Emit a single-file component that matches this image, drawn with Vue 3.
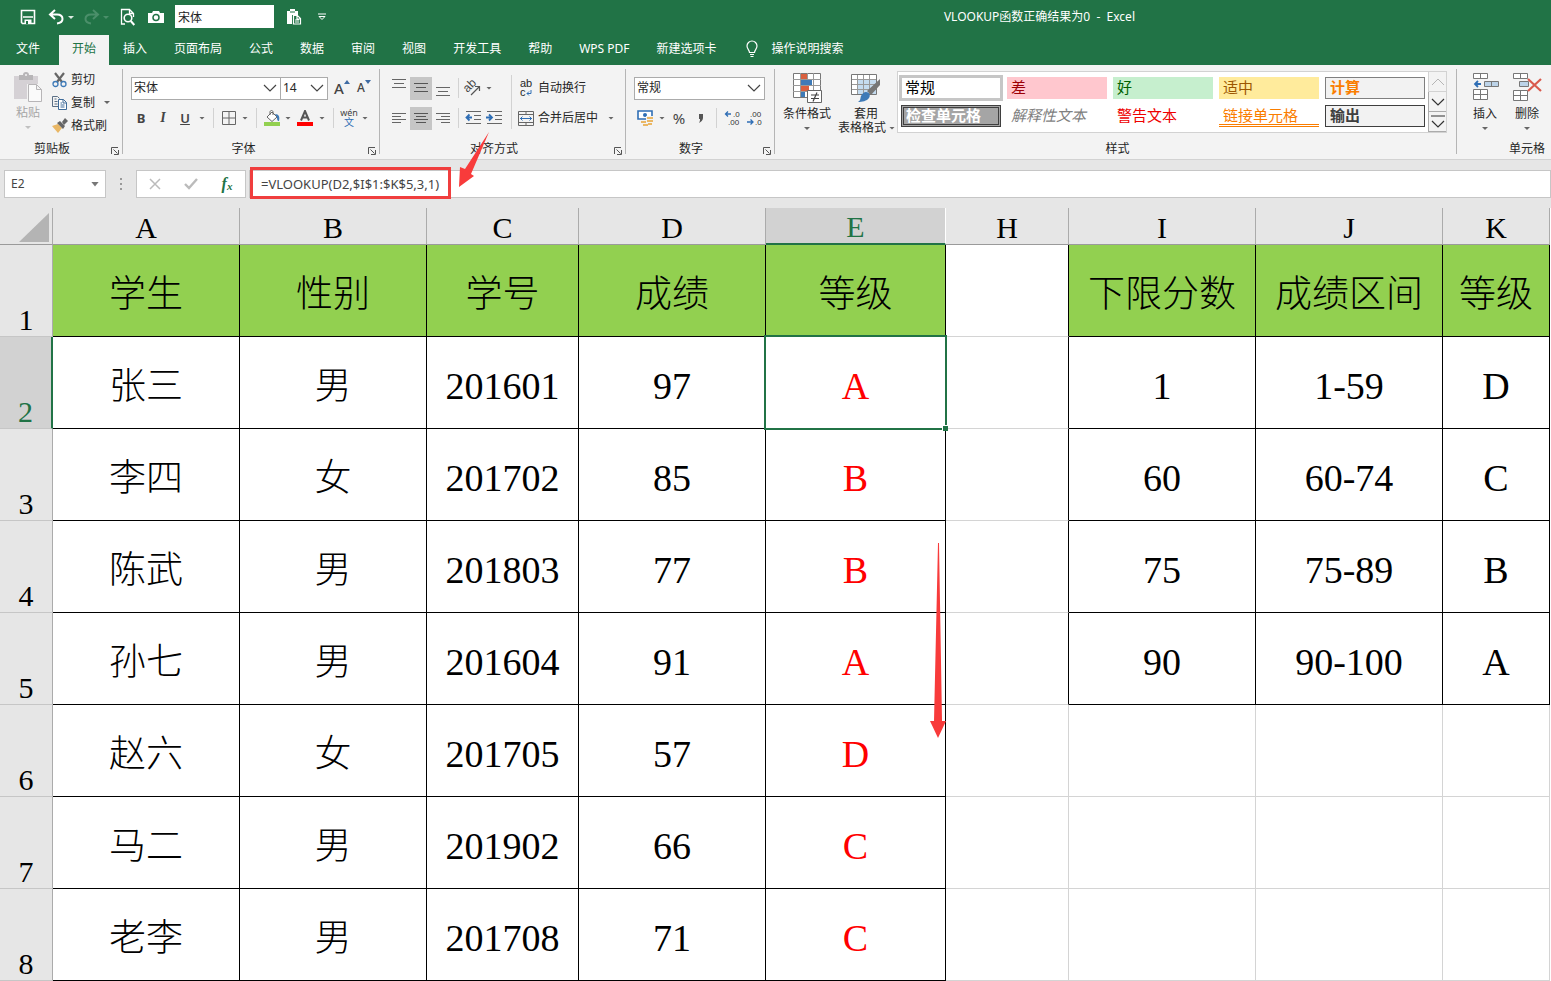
<script setup>
import { ref } from 'vue'

const tabs = ['插入', '页面布局', '公式', '数据', '审阅', '视图', '开发工具', '帮助', 'WPS PDF', '新建选项卡']
const columns = ['A', 'B', 'C', 'D', 'E', 'H', 'I', 'J', 'K']
const headings = ['学生', '性别', '学号', '成绩', '等级', '', '下限分数', '成绩区间', '等级']
const rows = [
  headings,
  ['张三', '男', '201601', '97', 'A', '', '1', '1-59', 'D'],
  ['李四', '女', '201702', '85', 'B', '', '60', '60-74', 'C'],
  ['陈武', '男', '201803', '77', 'B', '', '75', '75-89', 'B'],
  ['孙七', '男', '201604', '91', 'A', '', '90', '90-100', 'A'],
  ['赵六', '女', '201705', '57', 'D', '', '', '', ''],
  ['马二', '男', '201902', '66', 'C', '', '', '', ''],
  ['老李', '男', '201708', '71', 'C', '', '', '', ''],
]
const styles = [
  ['常规', 'normal'], ['差', 'bad'], ['好', 'good'], ['适中', 'neutral'], ['计算', 'calc'],
  ['检查单元格', 'check'], ['解释性文本', 'explain'], ['警告文本', 'warn'], ['链接单元格', 'linked'], ['输出', 'output'],
]
const formula = ref('=VLOOKUP(D2,$I$1:$K$5,3,1)')
const nameBox = ref('E2')
const quickFont = ref('宋体')

function cellClass(r, c) {
  return {
    head: r === 0 && c !== 5,
    lined: c < 5 || (c > 5 && r < 5),
    edge: c === 5 && r < 5,
    grade: c === 4 && r > 0,
    selected: c === 4 && r === 1,
    han: /[\u4e00-\u9fa5]/.test(rows[r][c]),
  }
}
</script>

<template>
  <div class="app">
    <header class="titlebar">
      <button class="q" aria-label="保存"><svg width="16" height="16" viewBox="0 0 16 16"><path d="M1.500 1.500h13v13h-12l-1-1z" fill="none" stroke="#fff" stroke-width="1.600"/><path d="M3 8h10" stroke="#fff" stroke-width="1.500"/><path d="M4.500 10.500h7v4h-7z" fill="#fff"/><path d="M6 12h2v3H6z" fill="#217346"/></svg></button>
      <button class="q undo" aria-label="撤消"><svg width="26" height="16" viewBox="0 0 26 16"><path d="M7 1L2 5.500 7 10M2.500 5.500H9c3.500 0 5.500 2 5.500 4.500S12.500 14 9 14.500" fill="none" stroke="#fff" stroke-width="2"/><path d="M20 7h6l-3 3z" fill="#dcebe2"/></svg></button>
      <button class="q undo" aria-label="恢复"><svg width="26" height="16" viewBox="0 0 26 16"><path d="M10 1l5 4.500L10 10M14.500 5.500H8C4.500 5.500 2.500 7.500 2.500 10s2 4 5.500 4.500" fill="none" stroke="#4b8f6a" stroke-width="2"/><path d="M20 7h6l-3 3z" fill="#4b8f6a"/></svg></button>
      <button class="q" aria-label="打印预览"><svg width="16" height="18" viewBox="0 0 16 18"><path d="M5 16H1.500V1.500h8l4 4V9M9.500 1.500v4h4" fill="none" stroke="#fff" stroke-width="1.300"/><circle cx="8" cy="10" r="3.800" fill="none" stroke="#fff" stroke-width="1.600"/><path d="M10.800 13l3.500 4" stroke="#fff" stroke-width="2"/></svg></button>
      <button class="q cam" aria-label="照相机"><svg width="16" height="14" viewBox="0 0 16 14"><path d="M0 3h4l1-2h6l1 2h4v10H0z" fill="#fff"/><circle cx="8" cy="7.500" r="3" fill="none" stroke="#217346" stroke-width="1.500"/></svg></button>
      <input v-model="quickFont" class="quick-font" aria-label="字体">
      <button class="q paste-q" aria-label="粘贴"><svg width="16" height="17" viewBox="0 0 16 17"><path d="M1 3h3V1h5v2h3v4H6v9H1z" fill="#fff"/><path d="M4 4h5" stroke="#217346"/><path d="M7.500 7.500h4l3 3v5.500h-7zM11 7.500V11h3.500M9 12h4M9 14h4" fill="none" stroke="#fff" stroke-width="1.200"/></svg></button>
      <button class="q more-q" aria-label="自定义快速访问工具栏"><svg width="10" height="8" viewBox="0 0 10 8"><path d="M1 1h8M2 3.500h6L5 6.500z" fill="none" stroke="#fff"/></svg></button>
      <h1>VLOOKUP函数正确结果为0&nbsp; -&nbsp; Excel</h1>
    </header>

    <nav class="tabs">
      <button class="file">文件</button>
      <button class="active">开始</button>
      <button v-for="t in tabs" :key="t">{{ t }}</button>
      <button class="tell"><svg width="14" height="18" viewBox="0 0 14 18"><path d="M4.500 12.500C4.500 10 2 9 2 6a5 5 0 0 1 10 0c0 3-2.500 4-2.500 6.500zM5 14.500h4M5.500 16.500h3" fill="none" stroke="#fff" stroke-width="1.200"/></svg>操作说明搜索</button>
    </nav>

    <section class="ribbon">
      <div class="group clip">
        <div class="clip-body">
          <button class="paste" disabled><svg width="30" height="32" viewBox="0 0 30 32"><path d="M1 4h24v8H14v15H1z" fill="#d5d1d5"/><path d="M6 3h4a3 3 0 0 1 6 0h4v5H6z" fill="#b7b5b7"/><circle cx="13" cy="3" r="1" fill="#f3f3f3"/><path d="M15.500 12.500h8l5 5v12h-13zM23.500 12.500v5h5" fill="#fafafa" stroke="#b7b5b7"/></svg>粘贴<i class="caret"></i></button>
          <div class="clip-list">
            <button><svg width="16" height="16" viewBox="0 0 16 16"><path d="M3 1l7 9M12 1L5 10" stroke="#666" stroke-width="2.200"/><circle cx="3.500" cy="12" r="2.500" fill="none" stroke="#3e7ab7" stroke-width="1.300"/><circle cx="11.500" cy="12" r="2.500" fill="none" stroke="#3e7ab7" stroke-width="1.300"/></svg>剪切</button>
            <button><svg width="16" height="16" viewBox="0 0 16 16"><path d="M6 11.500H.500v-10h5l2 2M2.500 4h2M2.500 6.500h3M2.500 9h3" fill="none" stroke="#5b6f85"/><path d="M6.500 4.500h5l3 3v7h-8zM11 4.500V8h3.500M8.500 8h1.500M8.500 10h4M8.500 12h4" fill="#fff" stroke="#3e6b99"/></svg>复制<i class="caret gap"></i></button>
            <button><svg width="16" height="16" viewBox="0 0 16 16"><path d="M0 8l6-2 4 4-4 5z" fill="#e9b765"/><path d="M5 5l3-2 5 5-2 3z" fill="#666"/><path d="M10 4l3-4 3 3-4 4z" fill="#666"/></svg>格式刷</button>
          </div>
        </div>
        <footer>剪贴板<i class="launch"><svg viewBox="0 0 8 8"><path d="M.5 7V.5H7M2.500 2.500l4 4M7.500 3v4.500H3" fill="none" stroke="#555"/></svg></i></footer>
      </div>

      <div class="group font">
        <div class="row">
          <span class="combo fam"><select aria-label="字体名称"><option>宋体</option></select><svg width="14" height="8" viewBox="0 0 14 8"><path d="M1 1l6 6 6-6" fill="none" stroke="#444" stroke-width="1.200"/></svg></span>
          <span class="combo size"><select aria-label="字号"><option>14</option></select><svg width="14" height="8" viewBox="0 0 14 8"><path d="M1 1l6 6 6-6" fill="none" stroke="#444" stroke-width="1.200"/></svg></span>
          <button class="tool grow">A<svg width="6" height="4" viewBox="0 0 6 4"><path d="M0 4l3-4 3 4z" fill="#3e6ba3"/></svg></button>
          <button class="tool grow small">A<svg width="6" height="4" viewBox="0 0 6 4"><path d="M0 0h6L3 4z" fill="#3e6ba3"/></svg></button>
        </div>
        <div class="row">
          <button class="tool"><b>B</b></button><button class="tool"><em>I</em></button><button class="tool"><u>U</u></button><i class="caret slot"></i>
          <i class="sep"></i>
          <button class="tool t20" aria-label="边框"><svg width="14" height="14" viewBox="0 0 14 14"><path d="M.5.5h13v13H.5zM7 1v12M1 7h12" fill="none" stroke="#666"/></svg></button><i class="caret slot"></i>
          <i class="sep"></i>
          <button class="tool t20" aria-label="填充颜色"><svg width="16" height="16" viewBox="0 0 16 16"><path d="M0 12h16v4H0z" fill="#92d050"/><path d="M3 7l5-5 5 5-5 4.500zM6 5V2c0-2 3-2 3 0v3" fill="#fff" stroke="#666"/><path d="M11 4c4 0 5 3 4 7-2 0-2-2-2-4z" fill="#3e7ab7"/></svg></button><i class="caret slot"></i>
          <button class="tool fc" aria-label="字体颜色"><svg width="16" height="16" viewBox="0 0 16 16"><path d="M0 12h16v4H0z" fill="#f00"/><path d="M4 10.500L8 1l4 9.500M5.500 7.500h5" fill="none" stroke="#555" stroke-width="2"/></svg></button><i class="caret slot"></i>
          <i class="sep"></i>
          <button class="tool t20 wen"><span>wén</span><span class="zi">文</span></button><i class="caret slot"></i>
        </div>
        <footer>字体<i class="launch"><svg viewBox="0 0 8 8"><path d="M.5 7V.5H7M2.500 2.500l4 4M7.500 3v4.500H3" fill="none" stroke="#555"/></svg></i></footer>
      </div>

      <div class="group align">
        <div class="align-body">
          <div class="align-left">
            <div class="row">
              <button class="tool" aria-label="顶端对齐"><svg width="14" height="18" viewBox="0 0 14 18"><path d="M0 .5h14M2 4.500h10M0 8.500h14" stroke="#666"/></svg></button>
              <button class="tool on" aria-label="垂直居中"><svg width="14" height="18" viewBox="0 0 14 18"><path d="M0 4.500h14M2 8.500h10M0 12.500h14" stroke="#555"/></svg></button>
              <button class="tool" aria-label="底端对齐"><svg width="14" height="18" viewBox="0 0 14 18"><path d="M0 8.500h14M2 12.500h10M0 16.500h14" stroke="#666"/></svg></button>
              <i class="sep"></i>
              <button class="tool t20" aria-label="方向"><svg class="spill" width="18" height="18" viewBox="0 0 18 18"><text x="1" y="10" transform="rotate(-45 7 9)" font-size="12" font-family="Liberation Sans" fill="#444">ab</text><path d="M7 16l8-8M11 7.500h4.500V12" fill="none" stroke="#555" stroke-width="1.200"/></svg></button><i class="caret slot"></i>
            </div>
            <div class="row">
              <button class="tool" aria-label="左对齐"><svg width="14" height="13" viewBox="0 0 14 13"><path d="M0 1.500h14M0 4.500h9M0 7.500h14M0 10.500h9" stroke="#666"/></svg></button>
              <button class="tool on" aria-label="居中"><svg width="14" height="13" viewBox="0 0 14 13"><path d="M0 1.500h14M2 4.500h10M0 7.500h14M2 10.500h10" stroke="#555"/></svg></button>
              <button class="tool" aria-label="右对齐"><svg width="14" height="13" viewBox="0 0 14 13"><path d="M0 1.500h14M5 4.500h9M0 7.500h14M5 10.500h9" stroke="#666"/></svg></button>
              <i class="sep"></i>
              <button class="tool t20" aria-label="减少缩进量"><svg width="16" height="14" viewBox="0 0 16 14"><path d="M1 .5h15M9 4.500h7M9 8.500h7M1 12.500h15" stroke="#666"/><path d="M7 6.500H2M4.500 3.500l-3 3 3 3" fill="none" stroke="#2f6eb5" stroke-width="1.800"/></svg></button>
              <button class="tool" aria-label="增加缩进量"><svg width="16" height="14" viewBox="0 0 16 14"><path d="M1 .5h15M9 4.500h7M9 8.500h7M1 12.500h15" stroke="#666"/><path d="M0 6.500h5M3 3.500l3 3-3 3" fill="none" stroke="#2f6eb5" stroke-width="1.800"/></svg></button>
            </div>
          </div>
          <i class="sep tall"></i>
          <div class="align-right">
            <button class="label-tool"><span class="abc"><span>ab</span><span>c<svg width="6" height="6" viewBox="0 0 6 6"><path d="M5 0v3.500H1M3 1.500l-2 2 2 2" fill="none" stroke="#2f6eb5"/></svg></span></span>自动换行</button>
            <button class="label-tool"><svg width="16" height="15" viewBox="0 0 16 15"><path d="M.5.5h15v14H.5zM1 3.500h14M1 11.500h14M8 1v2M8 12v2" fill="none" stroke="#666"/><path d="M2 7.500h12M4.500 5.500l-2 2 2 2M11.500 5.500l2 2-2 2" fill="none" stroke="#2f6eb5"/></svg>合并后居中<i class="caret gap"></i></button>
          </div>
        </div>
        <footer>对齐方式<i class="launch"><svg viewBox="0 0 8 8"><path d="M.5 7V.5H7M2.500 2.500l4 4M7.500 3v4.500H3" fill="none" stroke="#555"/></svg></i></footer>
      </div>

      <div class="group number">
        <div class="row">
          <span class="combo fmt"><select aria-label="数字格式"><option>常规</option></select><svg width="14" height="8" viewBox="0 0 14 8"><path d="M1 1l6 6 6-6" fill="none" stroke="#444" stroke-width="1.200"/></svg></span>
        </div>
        <div class="row">
          <button class="tool" aria-label="会计数字格式"><svg width="16" height="16" viewBox="0 0 16 16"><path d="M1 1h14v8H1z" fill="#fff" stroke="#2f6eb5" stroke-width="1.600"/><circle cx="8" cy="5" r="2" fill="#2f6eb5"/><path d="M9 6h7v9H5v-5h4z" fill="#f3f3f3"/><path d="M10 7h6v2h-6zM10 10h6v2h-6zM4 11h5v2H4zM6 14h5v2H6zM11 13h4v2h-4z" fill="#eab765"/></svg></button><i class="caret slot"></i>
          <button class="tool pct">%</button>
          <button class="tool" aria-label="千位分隔样式"><svg width="6" height="9" viewBox="0 0 6 9"><path d="M1 0h4v4c0 2-2 4-4 5 1-2 1-3 1-4H1z" fill="#555"/></svg></button>
          <i class="sep"></i>
          <button class="tool dec" aria-label="增加小数位数"><svg width="16" height="16" viewBox="0 0 16 16"><path d="M7 4H2M4 1.500L1.500 4 4 6.500" fill="none" stroke="#2f6eb5" stroke-width="1.300"/><text x="9" y="7" font-size="8" font-family="Liberation Sans" fill="#333">.0</text><text x="4" y="15" font-size="8" font-family="Liberation Sans" fill="#333">.00</text></svg></button>
          <button class="tool dec" aria-label="减少小数位数"><svg width="16" height="16" viewBox="0 0 16 16"><path d="M1 12h6M4.500 9.500L7 12l-2.500 2.500" fill="none" stroke="#2f6eb5" stroke-width="1.300"/><text x="4" y="7" font-size="8" font-family="Liberation Sans" fill="#333">.00</text><text x="9" y="15" font-size="8" font-family="Liberation Sans" fill="#333">.0</text></svg></button>
        </div>
        <footer>数字<i class="launch"><svg viewBox="0 0 8 8"><path d="M.5 7V.5H7M2.500 2.500l4 4M7.500 3v4.500H3" fill="none" stroke="#555"/></svg></i></footer>
      </div>

      <div class="group style">
        <div class="style-body">
          <button class="big"><svg width="30" height="32" viewBox="0 0 30 32"><path d="M1.500 1.500h27v24h-27z" fill="#fff" stroke="#777"/><path d="M9 2h6v5H9zM9 14h6v5H9z" fill="#d9603f"/><path d="M9 8h11v5H9zM9 20h4v5H9z" fill="#3e7ab7"/><path d="M15 14h2v5h-2z" fill="#d9603f"/><path d="M1 7.500h28M1 13.500h28M1 19.500h28M8.500 1v24M15.500 1v6M21.500 1v18" stroke="#999"/><path d="M15.500 18.500h14v12h-14z" fill="#fff" stroke="#666"/><path d="M19 23h8M19 26.500h8M25 20.500l-4 9" stroke="#444" stroke-width="1.200"/></svg>条件格式<i class="caret"></i></button>
          <button class="big"><svg width="30" height="32" viewBox="0 0 30 32"><path d="M.5 2.500h25v20H.5z" fill="#fff" stroke="#777"/><path d="M7 8h18v14H7z" fill="#c5dcf0"/><path d="M1 7.500h24M1 12.500h24M1 17.500h24M6.500 3v19M12.500 3v19M18.500 3v19" stroke="#999"/><path d="M29 7v6l-9 10-4-4z" fill="#777"/><path d="M15 20c3 0 5 3 3 6-2 3-7 4-11 4 3-2 2-3 3-6 1-2 3-4 5-4z" fill="#3e7ab7"/></svg>套用<span class="two">表格格式<i class="caret"></i></span></button>
          <div class="gallery">
            <div class="items">
              <button v-for="s in styles" :key="s[0]" :class="s[1]">{{ s[0] }}</button>
            </div>
            <div class="scroll">
              <button aria-label="上一行" class="dim"><svg width="14" height="8" viewBox="0 0 14 8"><path d="M1 7l6-6 6 6" fill="none" stroke="#b5b5b5"/></svg></button>
              <button aria-label="下一行"><svg width="14" height="8" viewBox="0 0 14 8"><path d="M1 1l6 6 6-6" fill="none" stroke="#333" stroke-width="1.200"/></svg></button>
              <button aria-label="其他"><svg width="14" height="13" viewBox="0 0 14 13"><path d="M0 1h14M1 6l6 6 6-6" fill="none" stroke="#333" stroke-width="1.200"/></svg></button>
            </div>
          </div>
        </div>
        <footer>样式</footer>
      </div>

      <div class="group cells">
        <div class="style-body">
          <button class="big"><svg width="28" height="32" viewBox="0 0 28 32"><path d="M2.500 1.500h14v5h-14zM9.500 1.500v5M2.500 17.500h14v10h-14zM9.500 17.500v10M2.500 22.500h14" fill="#fff" stroke="#777"/><path d="M13.500 9.500h14v5h-14zM20.500 9.500v5" fill="#bcd3e8" stroke="#777"/><path d="M10 12H4M7 9l-3 3 3 3" fill="none" stroke="#2f6eb5" stroke-width="1.800"/></svg>插入<i class="caret"></i></button>
          <button class="big"><svg width="30" height="32" viewBox="0 0 30 32"><path d="M1.500 1.500h14v5h-14zM8.500 1.500v5M1.500 18.500h14v10h-14zM8.500 18.500v10M1.500 23.500h14" fill="#fff" stroke="#777"/><path d="M7.500 9.500h9v5h-9z" fill="#bcd3e8" stroke="#777"/><path d="M16 7l13 12M29 7L16 19" stroke="#d9594c" stroke-width="2.200"/></svg>删除<i class="caret"></i></button>
        </div>
        <footer>单元格</footer>
      </div>
    </section>

    <section class="formula-bar">
      <div class="name-box"><input v-model="nameBox" aria-label="名称框"><button aria-label="展开名称"></button></div>
      <i class="dots"></i>
      <div class="fx">
        <button aria-label="取消"><svg width="12" height="12" viewBox="0 0 12 12"><path d="M1 1l10 10M11 1L1 11" stroke="#bbb" stroke-width="1.500"/></svg></button>
        <button aria-label="输入"><svg width="14" height="12" viewBox="0 0 14 12"><path d="M1 6l4 4 8-9" fill="none" stroke="#bbb" stroke-width="2.400"/></svg></button>
        <button class="fn">f<small>x</small></button>
      </div>
      <div class="formula"><input v-model="formula" aria-label="编辑栏"><i class="mark"></i></div>
    </section>

    <main>
      <table>
        <colgroup><col class="w-h"><col class="w-n"><col class="w-n"><col class="w-c"><col class="w-n"><col class="w-e"><col class="w-g"><col class="w-n"><col class="w-n"><col></colgroup>
        <thead>
          <tr><th class="corner"><svg width="30" height="29" viewBox="0 0 30 29"><path d="M30 0v29H0z" fill="#b4b4b4"/></svg></th><th v-for="c in columns" :key="c" :class="{ cur: c === 'E' }" scope="col">{{ c }}</th></tr>
        </thead>
        <tbody>
          <tr v-for="(row, r) in rows" :key="r">
            <th scope="row" :class="{ cur: r === 1 }">{{ r + 1 }}</th>
            <td v-for="(v, c) in row" :key="c" :class="cellClass(r, c)">{{ v }}<i v-if="r === 1 && c === 4" class="ring"></i></td>
          </tr>
        </tbody>
      </table>
    </main>

    <svg class="arrow a1" width="32" height="56" viewBox="0 0 32 56"><path d="M30 0L12 42l3 2L0 55l1-20 5 2z" fill="#f83b3b"/></svg>
    <svg class="arrow a2" width="16" height="196" viewBox="0 0 16 196"><path d="M8 0l1 0 3 178h4L8 195 0 178h4z" fill="#f83b3b"/></svg>
  </div>
</template>

<style>
body { background: #fff; overflow: hidden; }
</style>

<style scoped>
.app { position: relative; font: 12px/16px "Noto Sans", "Noto Sans CJK SC", sans-serif; color: #262626; }
.app * { box-sizing: border-box; }
button, input, select { font: inherit; color: inherit; border: 0; padding: 0; margin: 0; background: none; }
svg { display: block; flex: none; }
button { display: flex; align-items: center; justify-content: center; white-space: nowrap; }
.titlebar { display: flex; align-items: center; height: 35px; background: #217346; color: #fff; padding: 0 416px 2px 20px; }
.titlebar h1 { margin: 0 0 0 auto; font-size: 12px; font-weight: 400; white-space: nowrap; }
.q { width: 16px; }
.undo { width: 26px; margin-left: 12px; }
.undo + .undo { margin-left: 9px; }
.undo + .q:not(.undo) { margin-left: 11px; }
.cam { margin-left: 12px; }
.quick-font { width: 99px; height: 23px; margin-left: 11px; background: #fff; color: #222; padding-left: 3px; }
.paste-q { margin-left: 12px; }
.more-q { width: 10px; margin-left: 15px; }
.tabs { display: flex; gap: 1px; height: 30px; background: #217346; color: #fff; }
.tabs button { padding: 0 13px 2px; }
.tabs .file { padding: 0 16px 2px; margin-right: 2px; }
.tabs .active { background: #f3f3f3; color: #217346; }
.tabs .tell { gap: 13px; padding-left: 14px; }

.ribbon { display: flex; background: #f3f3f3; border-bottom: 1px solid #d2d2d2; height: 95px; }
.group { position: relative; display: flex; flex-direction: column; flex: none; padding-top: 8px; }
.group::after { content: ""; position: absolute; right: 0; top: 4px; bottom: 5px; width: 1px; background: #b5b5b5; }
.cells::after { display: none; }
.group footer { margin-top: auto; height: 22px; line-height: 23px; text-align: center; position: relative; }
.launch { position: absolute; right: 4px; bottom: 4px; width: 8px; height: 8px; }
.row { display: flex; align-items: center; height: 30px; }
.caret { flex: none; width: 6px; height: 3px; background: #666; clip-path: polygon(0 0, 100% 0, 50% 100%); }
.caret.slot { margin: 0 3px; }
.tool { flex: none; width: 22px; height: 23px; color: #444; }
.t20 { width: 20px; }
.on { background: #c6c6c6; }
.spill { overflow: visible; }
.sep { flex: none; width: 11px; height: 20px; background: linear-gradient(#d2d2d2, #d2d2d2) center / 1px 100% no-repeat; }
.sep.tall { height: 54px; margin-top: 2px; }
.combo { position: relative; display: flex; align-items: center; height: 23px; background: #fff; border: 1px solid #ababab; }
.combo select { appearance: none; width: 100%; height: 100%; padding-left: 2px; outline: 0; }
.combo svg { position: absolute; right: 3px; pointer-events: none; }

.clip { width: 123px; padding-top: 3px; }
.clip-body { display: flex; }
.clip-body .paste { flex-direction: column; justify-content: flex-start; width: 28px; margin: 4px 10px 0 14px; color: #a6a6a6; height: 60px; gap: 1px; }
.paste .caret { background: #c0c0c0; margin-top: 4px; }
.clip-list { display: flex; flex-direction: column; }
.clip-list button { height: 23px; gap: 3px; justify-content: flex-start; }
.clip-list .gap { margin-left: 6px; }
.clip footer { padding-right: 19px; margin-top: 0; }

.font { width: 257px; padding-left: 7px; }
.font footer { padding-right: 23px; }
.fam { width: 150px; margin-left: 1px; }
.size { width: 48px; margin-left: -1px; }
.grow { font-size: 15px; gap: 0; margin-left: 3px; font-weight: 500; }
.grow svg { margin-bottom: 12px; }
.grow.small { font-size: 12px; margin-left: 0; }
.tool b { font-size: 13px; }
.tool em { font: italic bold 14px "Liberation Serif", serif; }
.tool u { font-size: 13px; font-weight: 600; }
.fc { width: 22px; }
.wen { flex-direction: column; font-size: 9px; line-height: 8px; }
.zi { color: #2f6eb5; font-size: 10px; line-height: 10px; }

.align { width: 246px; padding-left: 8px; }
.align-body { display: flex; }
.align-left { width: 118px; }
.align .row .sep { width: 9px; }
.label-tool { height: 30px; gap: 4px; justify-content: flex-start; padding-left: 1px; }
.label-tool .gap { margin-left: 6px; }
.abc { display: flex; flex-direction: column; width: 16px; font: 11px/11px "Liberation Sans", sans-serif; text-align: left; padding-left: 2px; }
.abc span { display: flex; align-items: center; height: 9px; }
.align footer { padding-right: 26px; }

.number { width: 149px; padding-left: 8px; }
.fmt { width: 131px; }
.pct { font-size: 15px; }
.number .sep { width: 9px; }
.number footer { padding-right: 27px; }

.style { flex: 1; min-width: 0; padding-left: 3px; }
.style-body { display: flex; }
.big { flex: none; flex-direction: column; justify-content: flex-start; width: 58px; height: 61px; line-height: 14px; }
.big + .big { width: 60px; }
.big svg { margin-bottom: 3px; margin-top: -1px; }
.big > .caret { margin-top: 6px; }
.two { display: flex; align-items: center; gap: 3px; margin-left: 1px; }
.gallery { flex: 1; display: flex; height: 62px; margin: -2px 10px 0 1px; background: #fff; border: 1px solid #d2d2d2; }
.items { flex: 1; display: grid; grid-template-columns: repeat(5, 1fr); grid-template-rows: 22px 22px; gap: 6px; padding: 5px 3px 0; }
.items button { justify-content: flex-start; padding: 0 0 3px 4px; font: 15px/18px "Noto Sans CJK SC", sans-serif; }
.items .normal { outline: 3px solid #c6c6c6; outline-offset: -1px; color: #000; }
.items .bad { background: #ffc7ce; color: #9c0006; }
.items .good { background: #c6efce; color: #006100; }
.items .neutral { background: #ffeb9c; color: #9c5700; }
.items .calc { background: #f2f2f2; border: 1px solid #7f7f7f; color: #fa7d00; font-weight: 700; }
.items .check { background: #a5a5a5; border: 3px double #3f3f3f; color: #fff; font-weight: 700; padding-left: 2px; }
.items .explain { color: #7f7f7f; font-style: italic; }
.items .warn { color: #e00; }
.items .linked { color: #fa7d00; border-bottom: 3px double #fa7d00; padding-bottom: 0; }
.items .output { background: #f2f2f2; border: 1px solid #3f3f3f; color: #3f3f3f; font-weight: 700; }
.scroll { width: 18px; display: flex; flex-direction: column; background: #f3f3f3; }
.scroll button { flex: 1; border: 1px solid #ababab; border-width: 0 0 1px 1px; }
.scroll .dim { border-color: #d2d2d2; }
.cells { width: 94px; padding-left: 7px; }
.cells .big { width: 42px; }
.cells footer { padding-right: 6px; text-align: right; }

.formula-bar { display: flex; height: 48px; padding: 10px 0 10px 4px; background: #e6e6e6; color: #444; }
.formula-bar > div { height: 28px; background: #fff; border: 1px solid #c6c6c6; display: flex; align-items: center; }
.name-box { width: 102px; }
.name-box input { width: 86px; padding-left: 6px; }
.name-box button { width: 8px; height: 5px; background: #777; clip-path: polygon(0 0, 100% 0, 50% 100%); }
.dots { width: 30px; background: repeating-linear-gradient(#999 0 2px, transparent 2px 5px) center / 2px 12px no-repeat; }
.fx { width: 110px; }
.fx button { width: 36px; }
.fx .fn { font: italic 700 16px "Liberation Serif", serif; color: #217346; }
.fn small { font-size: 11px; margin-top: 4px; }
.formula { position: relative; flex: 1; margin-left: 3px; }
.formula input { width: 100%; padding-left: 11px; font-size: 13px; }
.mark { position: absolute; left: 0; top: -4px; width: 201px; height: 32px; border: 3px solid #f03e3e; }

main { overflow: hidden; padding-right: 1px; }
table { width: 100%; table-layout: fixed; border-collapse: separate; border-spacing: 0; font-family: "Liberation Serif", "Noto Sans CJK SC", serif; color: #000; }
.w-h { width: 53px; }
.w-n { width: 187px; }
.w-c { width: 152px; }
.w-e { width: 180px; }
.w-g { width: 123px; }
th { padding: 0; font-weight: 400; background: #e6e6e6; font-size: 30px; line-height: 32px; border-right: 1px solid #ababab; border-bottom: 1px solid #9a9a9a; }
thead th { height: 37px; padding-top: 3px; }
thead .cur { background: #d2d2d2; color: #217346; border-bottom: 2px solid #217346; border-right-color: #fff; }
.corner svg { margin: 0 0 0 19px; }
tbody th { height: 92px; vertical-align: bottom; border-bottom-color: #c6c6c6; }
tbody .cur { background: #d2d2d2; color: #217346; border-right: 2px solid #217346; }
td { position: relative; height: 92px; padding: 6px 0 0; text-align: center; font-size: 38px; line-height: 44px; border-right: 1px solid #d4d4d4; border-bottom: 1px solid #d4d4d4; white-space: nowrap; }
.han { font-size: 37px; font-weight: 300; padding-top: 8px; }
.lined { border-color: #000; }
.edge { border-right-color: #000; }
.head { background: #92d050; }
.grade { color: #f00; }
.ring { position: absolute; z-index: 1; inset: -2px; border: 2px solid #217346; }
.ring::after { content: ""; position: absolute; right: -3px; bottom: -3px; width: 5px; height: 5px; background: #217346; border: solid #fff; border-width: 1px 0 0 1px; box-sizing: content-box; }
.arrow { position: absolute; pointer-events: none; z-index: 2; }
.a1 { left: 459px; top: 132px; }
.a2 { left: 930px; top: 543px; }
</style>
